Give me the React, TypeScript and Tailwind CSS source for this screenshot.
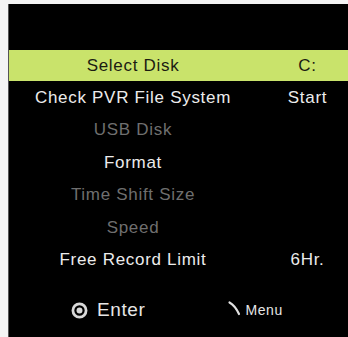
import React from "react";

const rows = [
  { label: "Select Disk", value: "C:", active: true },
  { label: "Check PVR File System", value: "Start" },
  { label: "USB Disk", dim: true },
  { label: "Format" },
  { label: "Time Shift Size", dim: true },
  { label: "Speed", dim: true },
  { label: "Free Record Limit", value: "6Hr." },
];

const App: React.FC = () => {
  return (
    <div className="w-[348px] h-[337px] bg-[#f4f4f4] pl-[8px] pt-[4px] overflow-hidden" style={{ fontFamily: '"Liberation Sans", Arial, sans-serif' }}>
      <div className="h-full bg-black border-l border-[#555] pt-[46px]">
        {rows.map((row) => (
          <div
            key={row.label}
            className={`grid grid-cols-[248px_1fr] items-center text-[17px] tracking-[0.7px] ${
              row.active ? "bg-[#c9e36b] text-[#1b1b12] h-[31px]" : row.dim ? "h-[32.5px] text-[#6f6f6f]" : "h-[32.5px] text-[#ececec]"
            }`}
          >
            <span className="text-center">{row.label}</span>
            <span className="text-center pl-[10px]">{row.value}</span>
          </div>
        ))}
        <div className="flex items-center h-[40px] mt-[14px] text-[#e6e6e6]">
          <svg width="17" height="17" viewBox="0 0 16 16" className="ml-[62px]">
            <circle cx="8" cy="8" r="6.2" fill="none" stroke="#d8d8d8" strokeWidth="2.6" />
            <circle cx="8" cy="8" r="2.8" fill="#d8d8d8" />
          </svg>
          <span className="ml-[9px] text-[19px] tracking-[0.6px]">Enter</span>
          <svg width="14" height="15" viewBox="0 0 14 15" className="ml-[83px] -mt-[3px]">
            <path d="M1.5 1.5 Q7 4.5 11 13" fill="none" stroke="#e0e0e0" strokeWidth="2.2" strokeLinecap="round" />
          </svg>
          <span className="text-[14px] tracking-[0.6px] ml-[3px]">Menu</span>
        </div>
      </div>
    </div>
  );
};

export default App;
